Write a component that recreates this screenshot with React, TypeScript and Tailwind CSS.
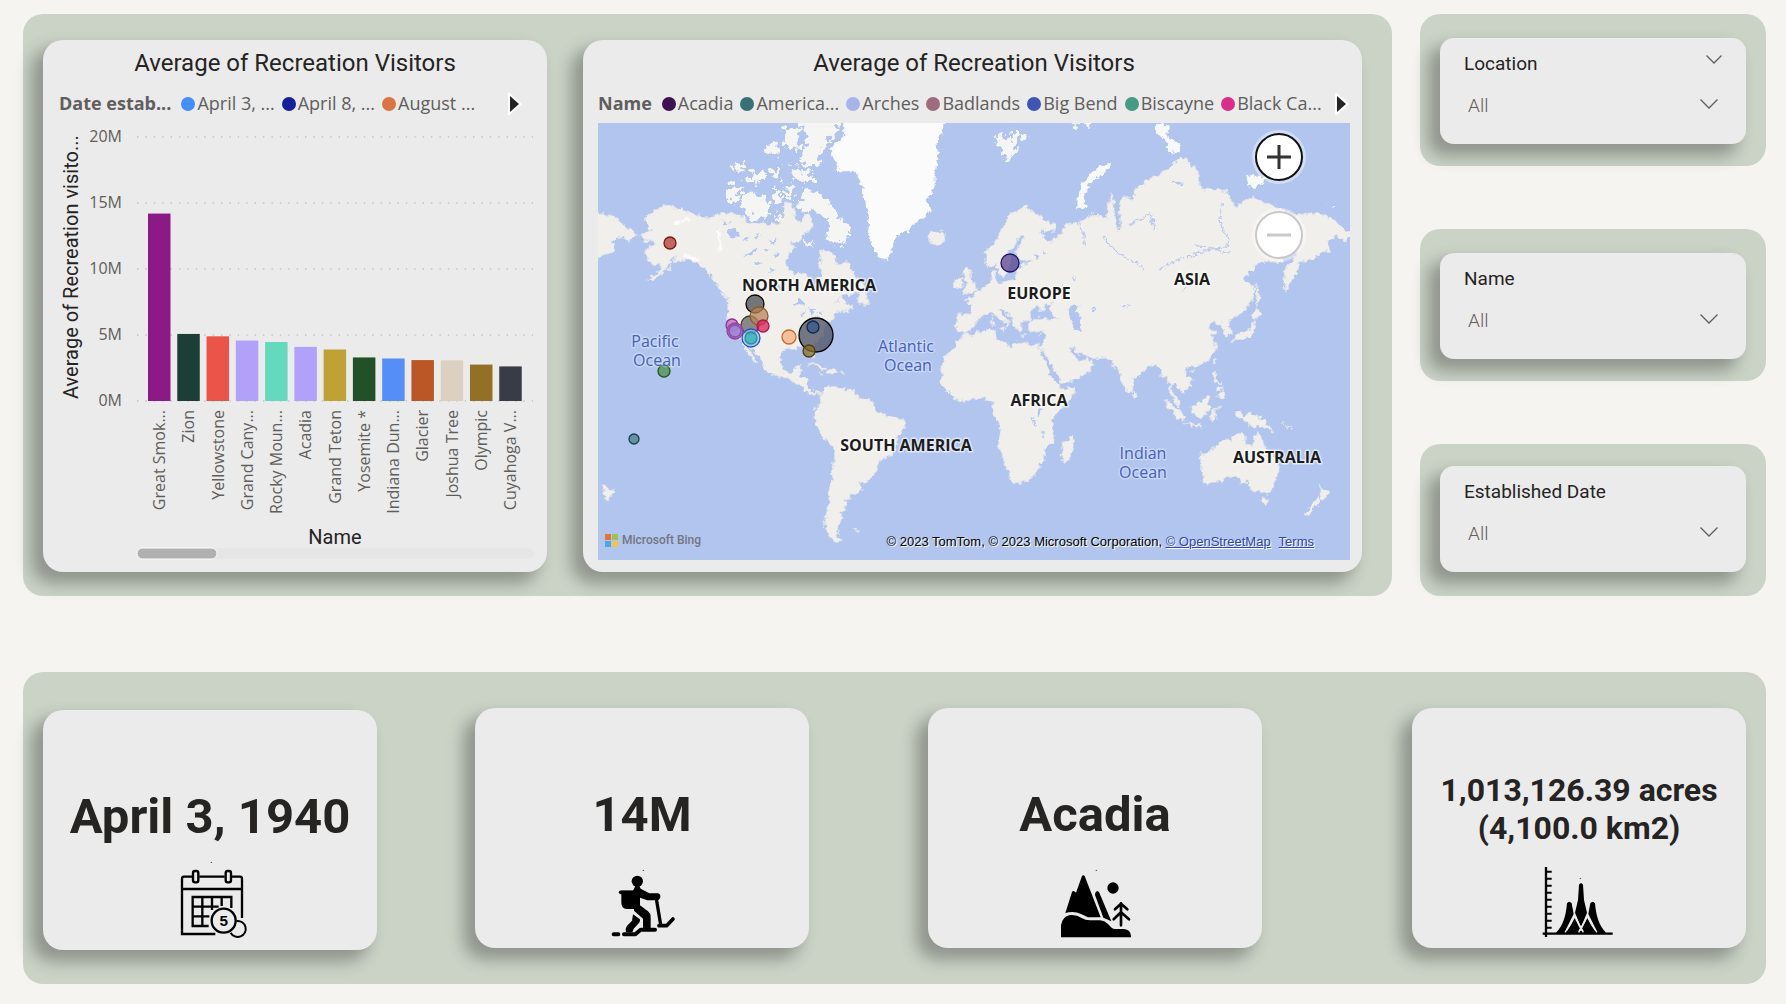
import React from "react";

type Ring = number[];

const NORTH_AMERICA: Ring = [-168,65.6,-166,64.5,-161,64.5,-161,63.5,-164.5,63,-166,61.6,-164,60,-162,59,-158,58.7,-157.5,57.5,-162,55.7,-164.5,54.6,-160,55.3,-156,57.3,-153.5,59,-151.8,61.1,-150,61.2,-151.8,59.3,-148,60,-144,60,-139.5,59.5,-136.5,58,-133.5,56.5,-131,54.5,-128.5,52,-125,50,-123,49,-124.7,48.3,-124,46,-124.4,42.8,-124,40.3,-122.4,37.5,-120.6,34.6,-118.4,33.9,-117.1,32.5,-115.8,30.2,-114.2,28.4,-115,27.8,-112.3,26,-112,24.7,-110,23,-109.5,23.4,-111,25.8,-112.8,28.3,-114.7,31.5,-113.1,31.3,-111,28,-109.3,26.5,-107.8,24.5,-106.3,23,-105.3,21.4,-105.6,20.3,-104,19,-101.8,17.8,-98.5,16.3,-95,16,-93.5,15.8,-91.5,14,-88,13.2,-87.5,12.7,-85.8,11,-85.5,10,-83.7,8.8,-82,8.2,-80.3,7.4,-79.5,8.9,-78,8,-77.4,7.4,-77,8.7,-79.5,9.6,-81.5,8.9,-83.4,10.5,-83.7,12.5,-83.2,15,-86,16,-88.5,15.8,-88,18,-87.5,20,-87,21.5,-90,21.2,-90.6,19.5,-91.8,18.5,-94.5,18.2,-96,19.3,-97.5,21.5,-97.5,24.5,-97.2,27.5,-95,29.2,-93,29.8,-90.5,29.2,-89,29.5,-88.5,30.4,-85.5,30,-84,30,-82.8,28.5,-82.5,27.3,-81.2,25.2,-80.3,25.5,-80.5,28.2,-81.4,30.5,-80.5,32.3,-78,33.9,-76,35,-75.7,36.5,-76.3,38.5,-75,38.5,-74.2,40.3,-72,41.2,-70.2,41.8,-70.8,43,-68.5,44.3,-66,45,-64.5,45.5,-66,43.7,-63.5,44.5,-60.5,45.7,-61.5,46.5,-64.5,46.7,-65,48,-67,49.2,-71,47,-66,50.2,-60,50.2,-56,52,-56,53.5,-60,55.5,-62,57.5,-64.5,60.2,-67,58.8,-69.5,59,-70,61,-74,62.3,-78,62.4,-77.5,60,-78.5,58.5,-76.8,57,-77,55.5,-79.5,54.5,-79,52,-80.5,51.3,-82.3,53,-82.3,55.2,-88,56.5,-92.5,57,-94.5,58.8,-94.5,60.3,-92.5,62,-90.5,63.2,-93,64,-88,64.2,-86.5,66,-82,66.8,-81.5,69,-85,69.8,-87.5,68,-90,69,-92,71.5,-95,71.8,-96,69.5,-98,68,-102,67.8,-108,68,-115,68,-115,69,-121,69.8,-125,70,-129,69.8,-135,69,-141,69.7,-148,70.5,-156.5,71.3,-162,70,-166.2,68.8,-164,67.5,-162,66.6,-166,66.2];

const SOUTH_AMERICA: Ring = [-77.4,8.5,-75.5,10.7,-72,12,-71.5,10.8,-70,12,-68,10.6,-64,10.3,-62,10.5,-60.5,8.5,-57.5,6.3,-54,5.8,-51.5,4.2,-50,1,-48,-0.8,-44.5,-2.5,-41,-2.9,-38.5,-3.8,-35.3,-5.3,-34.9,-8,-37,-11,-39,-13.5,-39,-17.5,-40.8,-21.5,-43,-23,-46,-24,-48.5,-26,-48.8,-28.6,-52,-32.5,-54.5,-34.8,-58,-34,-57,-36.5,-58,-38.2,-62,-39,-62.3,-40.8,-65,-41,-64,-42.5,-65.3,-45,-67.5,-46.2,-66,-48,-69,-50.5,-68.4,-52.5,-70,-53,-66,-55,-70,-55.3,-74,-53,-75.5,-49,-74.5,-46,-73,-42,-73.5,-38,-71.5,-33,-71.4,-29,-70.3,-23,-70.3,-18.4,-73,-16.5,-76.3,-14,-78.5,-9.5,-80,-6.3,-81.3,-4.5,-80,-2.8,-80.7,-1,-79.8,1,-77.5,3.5,-77.7,6.5];

const AFRICA: Ring = [-5.9,35.8,-2,35.1,3,36.8,10,37.3,10.8,35,10.5,34,15,32.3,19,30.3,20.5,32.6,25,31.7,29,30.9,32.3,31.2,32.6,29.9,34,26.7,35.5,24,37.2,21,37.5,18.8,39.5,15.5,43,12.2,43.3,11.5,45,10.5,51.2,11.9,50.5,9,48,4.5,45,1.8,41.5,-1.8,39.3,-5,39.5,-8,40.6,-11,40.6,-15,37,-17.8,34.8,-20,35.5,-24,32.8,-26,32.5,-28.5,30,-31.5,27,-33.7,22,-34.2,19.5,-34.8,18.2,-33,17.5,-30,15,-26.5,14.4,-22.5,11.8,-17.5,13.5,-12.5,12.3,-6,9.2,-2,9.5,1,9.5,4,7,4.3,5,5.8,1.5,6.2,-2,4.8,-7.5,4.4,-11,6.8,-13.3,9,-15,11,-16.7,12.5,-17.4,14.7,-16.3,17,-16.3,20,-17,21,-14.5,26,-12.8,27.9,-9.8,30,-9,32.5,-6.5,34.5];

const EURASIA: Ring = [-9,37,-6.3,36.8,-5.5,36.1,-2,36.8,0,38.6,-0.3,39.8,3,41.8,3.1,43.1,6.5,43.2,9,44.3,10.3,43.5,12.3,41.7,15.6,40,16,38,17,39,16.8,40.4,18.4,40,16,41.8,13.6,43.6,12.4,45.3,13.8,45,15,44.5,19.4,41.8,19.5,40,21.5,37,23,36.5,24,38,23,40.2,26,40.8,29,41.2,28,43.5,30.5,46,33,46,33.5,44.5,36.5,45.3,35,46.3,39,47.2,37.5,45,41.5,42,41,41.2,36,41.7,32,41.8,29,41,26.5,39.5,27.5,37,30.5,36.6,36,36.5,35.8,34.5,34.3,31.3,32.6,30.2,34,28,35,29.5,35,28,37,25,39,21.5,42.5,16.5,43.3,12.7,45,12.9,52,15.6,55,17.3,57.8,19,59.8,22.4,58.5,23.6,56.3,26.2,56,24.5,54,24.1,51.5,24.5,51.2,26,50.2,26.5,48,29.9,50,30.2,51.5,27.8,54.5,26.6,57,27,58.5,25.5,61.5,25.1,66.5,25.3,67.5,23.9,70,22.5,69,22,70.5,20.8,72.7,21,73,17.5,74.8,12.8,76.3,9.5,77.5,8,79.8,10.3,80.2,13.3,80.2,15.7,82.3,16.7,85,19.5,87,21.5,90,22,92,22.3,94.3,18.5,94.5,16,97,16.8,98.5,13,98.3,8.5,100.4,5.5,101.5,2.8,103.7,1.4,103.4,4,101.5,6.8,99.5,9.3,100,13.3,101,13,103,11,105,8.8,107,10.5,109.3,12,109,15,106,18.8,108,21.5,110,21.3,113.5,22.2,117,23.5,120,26.5,122,30,121,32.5,119.3,35,122.5,37,119,37.5,117.7,39,121,40.8,122,39.2,125,39.8,125,37.8,126.5,34.5,129.3,35.3,129.3,37,127.5,39.5,130.5,42.3,133,42.8,136,44.5,140.3,48.5,141,52.5,137,54,135.5,54.8,139,57,143,59.3,149,59.6,154.5,59.4,156.5,61.5,163,62,161,60.5,156,57,155.7,54,156.7,51,158.5,53,162,56,163.3,58,163,59.5,170,60,174,61.8,179,62.3,177.5,64.5,182,65.5,187,64.5,190,66,184,67.5,180,69,171,70,161,69.5,152,71,140,72.5,131,71,127,73.5,114,73.7,113,76,104.3,77.7,96,76,87,75,80.5,73.5,80,72,75,72.8,73,71,74,67.5,72,66.5,71,69,69.5,73,67,71,67,69,60,69.8,54,68.3,46,68,44,66.2,40,64.7,37,64.2,33,66.7,40.5,66.5,41,67.5,33,69.4,26,71,18,69.8,13,66,10.5,64,5.5,62,5.3,59,8,58,10.7,59.2,12.5,56.5,13,55.4,16,56.3,17.5,58.8,18.8,60,17.3,62,21.5,64.5,24,65.8,25.3,65,21.5,62.8,21.5,61,23,60,29.5,60,27.5,59.4,23.5,59,24,57.8,21.5,57.5,20.5,54.8,14,54,11,54,10.5,57.5,8.2,57,8.5,54,4.5,52.3,2,51,-1.5,49.5,-4.5,48.4,-1.5,46.5,-1.5,43.5,-8.5,43.5,-9,41];

const AUSTRALIA: Ring = [113.5,-22,114,-26.5,115.7,-32,115,-34.3,118,-35,124,-33.5,129,-31.7,131.5,-31.5,135.5,-34.8,138,-33,138,-35.7,140.5,-38,145,-38.3,147,-39,150,-37.5,151.5,-33,153.6,-28.5,153,-25.5,149,-20.5,146,-18.8,145.3,-15,142.5,-10.8,141.5,-13.5,140.8,-17.5,139.5,-17.5,135.5,-15,136.8,-12.2,132.5,-11.3,130,-13.5,129,-15,126.5,-14,122.5,-17.5,122,-18.3,118,-20.3];

const ISLANDS: Ring[] = [
  [49.3,-12,50.4,-15.5,47.5,-24.8,45,-25.5,43.5,-22.5,44.3,-19.5,44.5,-16.5,47.5,-15],
  [-196,70,-189,70,-180,69,-176,67.5,-170,66,-173,64.5,-178,65.5,-182,64.5,-181,62.3,-190,60.5,-196,60],
  [-5.5,50,1.4,51.2,0.5,53,-2,55.5,-2,57.5,-4,58.6,-6,57,-4.5,54.5,-3,53.5,-5,52],
  [-10,52,-6.3,52.2,-6,55,-8.5,55,-10,54],
  [-24,65.5,-22,64,-18.5,63.5,-14,64.7,-15,66.3,-22,66.3],
  [142,54,143.5,49.5,142,46.2,142,50],
  [140,42,140.3,43.3,142,45.4,145.3,43.3,143.2,42],
  [130,31.5,131.5,34,135.5,33.6,140,35.2,141.5,38,141.5,41.2,140,40.5,139,38,136.5,36.8,132.5,35.4,129.8,33],
  [120.3,23,121.2,25.2,121.8,24.8,120.9,22],
  [108.7,19.3,110.8,20,110,18.4],
  [120.3,16.5,121,18.5,122.2,18.3,121.6,15.5,124,13,121,13.8],
  [122,7,125.5,9.5,126.4,7.5,125.4,5.7],
  [122,10,124,11.5,125.5,12.3,125,10.3,123,9.3],
  [109,1.5,111.5,2.5,115.5,5.5,117,7,119,5.2,117.5,3,118.8,1,116.5,-2,115,-4,110.5,-3],
  [95.3,5.6,98,4.2,103,0,106,-3,105.7,-5.8,102.3,-4,99,0],
  [105.3,-6.8,108.5,-6.7,114.3,-7.7,114.3,-8.6,108,-7.8],
  [119,-3.3,120,0.5,125,1.5,120.7,0,121.5,-1.5,123,-5,121,-3,120.3,-5.5,119.5,-5.5],
  [131,-0.8,134,-0.8,135.2,-3.3,138,-1.6,145,-4.3,147.5,-6.5,150.5,-10.5,147,-9.5,143.5,-8.5,138,-8.3,138,-5.7,133,-4],
  [144.7,-40.8,148.2,-41,147,-43.5,146,-43.4],
  [172.7,-34.5,175.5,-36.8,178.5,-37.8,176.8,-40,175,-41.5,174,-39.3,174.7,-37],
  [172.8,-40.6,174.2,-41.7,171,-44.5,168.5,-46.6,166.5,-46],
  [-187.3,-34.5,-184.5,-36.8,-181.5,-37.8,-183.2,-40,-185,-41.5,-186,-39.3],
  [79.8,9.6,81.8,7.5,80.5,6,79.8,7],
  [12.5,38,15.5,38.2,15,36.8],
  [8.3,41,9.6,41,9.5,39.1,8.5,39],
  [8.7,42.6,9.5,42.8,9.2,41.5],
  [23.6,35.5,26.2,35.2,24.8,34.9],
  [32.4,34.9,34.4,35.6,33.6,34.8],
  [-84.8,22,-82,23.1,-79,22.5,-74.2,20.2,-77.5,19.9,-79,21.5,-82,22.5],
  [-74.3,18.5,-73,19.9,-70,19.7,-68.5,18.5,-71.5,17.8],
  [-78.3,18.3,-76.3,18.1,-77.5,17.8],
  [-67.2,18.4,-65.7,18.4,-66.8,17.9],
  [-59.3,47.7,-57,51,-55.5,51.5,-53,48.5,-53.5,46.7,-56,47],
  [-128,50.7,-125,49.8,-123.5,48.4,-126,49.2],
  [-154.5,57.5,-152.5,58.3,-152.5,57.2],
  [165.5,-20.5,167,-22.3,166,-21.8],
  [155,-6,157,-7.5,160.5,-9.5,156,-7.4],
  [-61,-51.5,-58,-51.5,-59,-52.3],
];

const POLAR_ISLANDS: Ring[] = [
  [52,70.8,57,70.7,55,72.5,58,74.5,68,76.3,69,77,60,76.2,55,74.5,52,72.5],
  [137,75.5,148,75.2,142,74,138,74],
  [91,80.8,98,80.6,97,79.6,104,79,104,78,98,78.2,96,79.4,91,80],
];

const ARCTIC: Ring[] = [
  [-62,66.5,-64.5,65,-67,63,-72,64,-74,65.5,-73,68,-79,70,-86,70,-89,71,-86,73.5,-81,73.5,-77,72.5,-71,71,-67,69],
  [-64,82.5,-70,80,-75,79,-79,76.5,-88,76.5,-85,79,-84,80,-90,81,-90,82.5],
  [-80,75.5,-92,76.5,-91,74.7,-81,74.6],
  [-117,71,-114,69.2,-105,69,-102,69.8,-105,72.5,-110,73,-117,73],
  [-125,72,-121,71.4,-117,73.5,-122,74.3,-124.5,74],
  [-95,74,-91,73.5,-92,72.5,-95,72.2],
  [-101,73.5,-97,73.8,-97,71.5,-102,72],
  [-116,75.5,-106,76,-106,74.8,-113,74.5],
  [-103,76,-98,76.5,-98,75],
  [-122,76.5,-116,77,-118,75.8],
  [-96,80.5,-88,80.5,-89,78.3,-95,78.5],
  [-105,79,-99,79,-99,77.8,-104,78],
  [-87,65.5,-82,64,-81,63.5,-86,63.5],
  [-99,70,-96,69,-99,68.7],
  [50,81.5,62,81.5,58,80.6,48,80.6],
  [11,79.6,15,77.4,18,76.9,20,78.6,26,79.8,21,80.2,16,79.4,13,79.9],
  [179,71.4,182,71.2,180,70.9],
];

const GREENLAND: Ring = [-66,82.5,-66,79.5,-73,78.5,-70,77,-68,76,-60,76,-57,74.5,-55,72,-54,70,-53,68,-53.5,66,-52,64,-50,62,-47.5,60.8,-44,59.9,-42.5,61.5,-41,63.5,-39,65.5,-34,66.5,-30,68,-25,69,-22,70.5,-24,72,-20,74,-20,76,-18,77.5,-19,79,-14,81,-12,82.5];

const LAKES: Ring[] = [
  [47,45,50,46.8,53,46.5,51,44.5,54,42,53.5,37,50,37.5,49.5,40.5,47.5,43],
  [-92,46.8,-88,48.6,-84.8,46.8,-88,46.8],
  [-87.8,42,-85,45.8,-86.2,43],
  [-84.5,46,-80,45,-82,43.2],
  [-83,41.6,-79,42.9,-80,42.2],
  [-79.5,43.4,-76.3,44,-77,43.4],
  [-98.5,53.5,-96.5,51,-97,50.8,-99,52.5],
  [-125,66.5,-120,67,-118,65.5,-122,65],
  [-117,61,-109,62.8,-112,61.2],
  [-111,59.3,-106,59.4,-110,58.7],
  [-117,64.8,-113,65.2,-115,64.2],
  [-111,65.5,-107,65.8,-109,64.8],
  [-104,64.5,-99,64.8,-101,63.8],
  [-107,62.5,-103,62.8,-105,61.9],
  [-103,58.5,-101,57.5,-102.5,56.5],
  [-127,68.4,-123,68.2,-125,67.6],
  [-101,61.5,-98,61.8,-99,60.9],
  [-73,55,-70,54.6,-72,54],
  [-66,54.5,-63,54,-65,53.6],
  [32,0.5,34.5,0,33,-2.5,31.8,-2],
  [29.2,-3.5,29.8,-3.5,31,-8.5,30.4,-8.5],
  [34,-10,34.8,-10,35,-14,34.3,-13],
  [59,45,61,46.3,60,44],
  [104,51.6,108,53.4,109.8,55.6,108.5,53.4,105,51.4],
  [30.5,61.5,32.8,61,31.5,59.9],
  [34.5,62.5,36.3,61.5,35.2,61],
  [74,46.5,79,46.6,75,45.6],
  [44,54,46,52,45.4,51],
  [49,56,51,55,50,54],
  [89,69,92,68.5,90,68],
  [100,74.8,106,74.5,102,74.2],
];

const project = (lon: number, lat: number): [number, number] => {
  const phi = (lat * Math.PI) / 180;
  return [376.3 + lon * 1.986, 287 - 113.8 * Math.log(Math.tan(Math.PI / 4 + phi / 2))];
};

const toPath = (rings: Ring[]) =>
  rings
    .map((ring) => {
      const points: string[] = [];
      for (let i = 0; i < ring.length; i += 2) {
        const [x, y] = project(ring[i], ring[i + 1]);
        points.push(`${x.toFixed(1)} ${y.toFixed(1)}`);
      }
      return `M${points.join("L")}Z`;
    })
    .join("");

const BUBBLES = [
  { x: 72, y: 120, r: 6, fill: "#b03a32", stroke: "#7d1512" },
  { x: 412, y: 140, r: 9, fill: "#5a4390", stroke: "#1e1160" },
  { x: 152, y: 202, r: 9, fill: "#666666", stroke: "#333333" },
  { x: 157, y: 181, r: 9, fill: "#4a4c50", stroke: "#000000" },
  { x: 161, y: 193, r: 9, fill: "#b88555", stroke: "#8a5a2b" },
  { x: 165, y: 203, r: 6, fill: "#dc1f5c", stroke: "#b0174a" },
  { x: 134, y: 202, r: 6, fill: "#c06ac8", stroke: "#8d2f9c" },
  { x: 137, y: 208, r: 8, fill: "#8f5aa8", stroke: "#b03a8c" },
  { x: 137, y: 208, r: 6, fill: "#a78be0", stroke: "#7a55b8" },
  { x: 153, y: 215, r: 9, fill: "#8fc0ee", stroke: "#1f55d0" },
  { x: 153, y: 215, r: 6, fill: "#2eb0b0", stroke: "#2a8c96" },
  { x: 191, y: 214, r: 7, fill: "#f6b080", stroke: "#c46a2c" },
  { x: 218, y: 212, r: 17, fill: "#4a4f60", stroke: "#000000" },
  { x: 215, y: 204, r: 6, fill: "#36598c", stroke: "#12284f" },
  { x: 211, y: 228, r: 6, fill: "#85702a", stroke: "#5a3a10" },
  { x: 66, y: 248, r: 6, fill: "#4d8f4a", stroke: "#1f5a1c" },
  { x: 36, y: 316, r: 5, fill: "#4a7f8c", stroke: "#1c3f48" },
];

const CONTINENTS = [
  { text: "NORTH AMERICA", x: 211, y: 168 },
  { text: "EUROPE", x: 441, y: 176 },
  { text: "ASIA", x: 594, y: 162 },
  { text: "AFRICA", x: 441, y: 283 },
  { text: "SOUTH AMERICA", x: 308, y: 328 },
  { text: "AUSTRALIA", x: 679, y: 340 },
];

const OCEANS = [
  { text: "Pacific", x: 57, y: 224 },
  { text: "Ocean", x: 59, y: 243 },
  { text: "Atlantic", x: 308, y: 229 },
  { text: "Ocean", x: 310, y: 248 },
  { text: "Indian", x: 545, y: 336 },
  { text: "Ocean", x: 545, y: 355 },
];

function WorldMap() {
  return (
    <svg viewBox="0 0 752 437" className="block h-auto w-full bg-[#b2c5ee]" role="img" aria-label="Visitors by park location">
      <defs>
        <filter id="coast" x="0" y="0" width="100%" height="100%">
          <feTurbulence type="fractalNoise" baseFrequency="0.22" numOctaves="2" seed="4" result="n" />
          <feDisplacementMap in="SourceGraphic" in2="n" scale="7" xChannelSelector="R" yChannelSelector="G" />
        </filter>
        <filter id="arctic" x="0" y="0" width="100%" height="100%">
          <feTurbulence type="fractalNoise" baseFrequency="0.16" numOctaves="3" seed="9" result="n" />
          <feDisplacementMap in="SourceGraphic" in2="n" scale="18" xChannelSelector="R" yChannelSelector="G" />
        </filter>
      </defs>
      <g filter="url(#coast)">
        <rect width="752" height="437" fill="#b2c5ee" />
        <path
          d={toPath([NORTH_AMERICA, SOUTH_AMERICA, AFRICA, EURASIA, AUSTRALIA, ...ISLANDS])}
          fill="#f0efeb"
          stroke="#dde1e9"
          strokeWidth="1"
        />
        <path d={toPath(POLAR_ISLANDS)} fill="#f7f8f8" />
        <path d={toPath(LAKES)} fill="#b2c5ee" />
        <path
          d="M506 112Q512 128 530 136T545 148M625 80Q618 98 628 112T612 126L590 134M480 100Q488 110 486 122M586 134L562 146M530 102L552 92L556 106M596 122L632 130M456 108L466 92"
          fill="none"
          stroke="#b8c7ec"
          strokeWidth="1.2"
        />
      </g>
      <g filter="url(#arctic)">
        <path d={toPath(ARCTIC)} fill="#f5f5f4" />
      </g>
      <g filter="url(#coast)">
        <path d={toPath([GREENLAND])} fill="#fbfbfb" />
        <path d="M76 100L92 96M86 132L102 138M120 108L123 128" stroke="#fbfbfb" strokeWidth="3" fill="none" />
      </g>
      {BUBBLES.map((b, i) => (
        <circle key={i} cx={b.x} cy={b.y} r={b.r} fill={b.fill} fillOpacity="0.75" stroke={b.stroke} strokeWidth="1.3" />
      ))}
      <g textAnchor="middle" paintOrder="stroke" stroke="#ffffff" strokeOpacity="0.6" strokeWidth="3" strokeLinejoin="round">
        {CONTINENTS.map((c) => (
          <text key={c.text} x={c.x} y={c.y} fill="#1c1c1c" className="font-['Open_Sans',sans-serif] text-[16px] font-bold">
            {c.text}
          </text>
        ))}
        {OCEANS.map((o, i) => (
          <text key={i} x={o.x} y={o.y} fill="#4560bd" strokeOpacity="0.3" className="font-['Open_Sans',sans-serif] text-[16px] font-medium">
            {o.text}
          </text>
        ))}
      </g>
    </svg>
  );
}

const BARS = [
  { name: "Great Smok...", value: 14.2, color: "#8c1a86" },
  { name: "Zion", value: 5.08, color: "#1d3d37" },
  { name: "Yellowstone", value: 4.9, color: "#eb5449" },
  { name: "Grand Cany...", value: 4.58, color: "#b2a1f9" },
  { name: "Rocky Moun...", value: 4.47, color: "#64d9be" },
  { name: "Acadia", value: 4.1, color: "#b2a1f9" },
  { name: "Grand Teton", value: 3.9, color: "#bea235" },
  { name: "Yosemite *", value: 3.3, color: "#225128" },
  { name: "Indiana Dun...", value: 3.22, color: "#568ef7" },
  { name: "Glacier", value: 3.1, color: "#bb5627" },
  { name: "Joshua Tree", value: 3.08, color: "#dcd0c0" },
  { name: "Olympic", value: 2.76, color: "#937026" },
  { name: "Cuyahoga V...", value: 2.62, color: "#393c47" },
];

function VisitorsChart() {
  return (
    <svg viewBox="0 0 504 449" className="block h-auto w-full" role="img" aria-label="Average of Recreation visitors by Name">
      {[20, 15, 10, 5, 0].map((m) => {
        const y = 278 - m * 13.2;
        return (
          <g key={m}>
            <line x1="94" x2="490" y1={y} y2={y} stroke="#c4c4c4" strokeWidth="1.4" strokeDasharray="1.4 7" />
            <text x="79" y={y + 5} textAnchor="end" fill="#605e5c" className="font-['Open_Sans',sans-serif] text-[16px]">
              {m}M
            </text>
          </g>
        );
      })}
      {BARS.map((bar, i) => {
        const x = 105 + i * 29.27;
        const h = bar.value * 13.2;
        return (
          <g key={bar.name}>
            <rect x={x} y={278 - h} width="22.5" height={h} fill={bar.color} />
            <text
              transform={`translate(${x + 17} 287) rotate(-90)`}
              textAnchor="end"
              fill="#605e5c"
              className="font-['Open_Sans',sans-serif] text-[16px]"
            >
              {bar.name}
            </text>
          </g>
        );
      })}
      <text transform="translate(35 276) rotate(-90)" fill="#252423" className="font-[Roboto,sans-serif] text-[20px]">
        Average of Recreation visito...
      </text>
      <text x="292" y="421" textAnchor="middle" fill="#252423" className="font-[Roboto,sans-serif] text-[20px]">
        Name
      </text>
      <rect x="94" y="425" width="397" height="11" rx="5.5" fill="#e6e6e6" />
      <rect x="94" y="425" width="80" height="11" rx="5.5" fill="#b0b0b0" stroke="#ffffff" />
    </svg>
  );
}

function NextButton() {
  return (
    <button type="button" aria-label="Next legend items" className="shrink-0">
      <svg viewBox="0 0 16 22" className="h-[22px] w-4">
        <path d="M3 3L12 11L3 19Z" fill="#252423" stroke="#fff" strokeWidth="4" paintOrder="stroke" />
      </svg>
    </button>
  );
}

type LegendItem = { text: string; dot: string };

const DATE_ITEMS: LegendItem[] = [
  { text: "April 3, ...", dot: "bg-[#438efb]" },
  { text: "April 8, ...", dot: "bg-[#15219a]" },
  { text: "August ...", dot: "bg-[#d97545]" },
];

const NAME_ITEMS: LegendItem[] = [
  { text: "Acadia", dot: "bg-[#3e1150]" },
  { text: "America...", dot: "bg-[#377075]" },
  { text: "Arches", dot: "bg-[#a7b4ea]" },
  { text: "Badlands", dot: "bg-[#a06b7c]" },
  { text: "Big Bend", dot: "bg-[#3d55b4]" },
  { text: "Biscayne", dot: "bg-[#489a84]" },
  { text: "Black Ca...", dot: "bg-[#da2c88]" },
];

function Legend({ title, items }: { title: string; items: LegendItem[] }) {
  return (
    <div className="flex h-[39px] items-center font-['Open_Sans',sans-serif] text-[18px] whitespace-nowrap text-[#605e5c]">
      <span className="mr-[10px] font-bold">{title}</span>
      <ul className="flex flex-1 gap-[7px]">
        {items.map((item) => (
          <li key={item.text} className="flex items-center gap-[2px]">
            <span className={`size-[14px] rounded-full ${item.dot}`} />
            {item.text}
          </li>
        ))}
      </ul>
      <NextButton />
    </div>
  );
}

const CARD = "bg-[#ebebeb] shadow-[-10px_10px_16px_2px_rgba(0,0,0,0.29)]";

function Slicer({ label, header, className = "pt-6 pb-[22px]" }: { label: string; header?: boolean; className?: string }) {
  const id = `slicer-${label.toLowerCase().replace(" ", "-")}`;
  return (
    <div className={`rounded-[20px] bg-[#cbd3c7] px-5 ${className}`}>
      <div className={`rounded-[14px] pt-[13px] pr-6 pb-[22px] pl-6 ${CARD}`}>
        <div className="flex items-center justify-between">
          <label htmlFor={id} className="text-[19px] leading-[26px] text-[#252423]">
            {label}
          </label>
          {header && (
            <button type="button" aria-label={`${label} options`} className="-mt-[10px]">
              <svg viewBox="0 0 16 9" className="h-[9px] w-4" fill="none" stroke="#605e5c" strokeWidth="1.3">
                <path d="M0.5 0.5L8 8L15.5 0.5" />
              </svg>
            </button>
          )}
        </div>
        <div className="relative mt-[13px]">
          <select id={id} className="block h-8 w-full appearance-none bg-transparent pl-1 text-[19px] font-light text-[#605e5c]">
            <option>All</option>
          </select>
          <svg
            viewBox="0 0 18 10"
            className="pointer-events-none absolute top-[9px] right-1 h-[10px] w-[18px]"
            fill="none"
            stroke="#605e5c"
            strokeWidth="1.3"
          >
            <path d="M0.5 0.5L9 9L17.5 0.5" />
          </svg>
        </div>
      </div>
    </div>
  );
}

function CalendarIcon() {
  return (
    <svg viewBox="465 630 210 210" className="size-[70px] overflow-visible" fill="none" stroke="#000" strokeWidth="7">
      <path d="M516 650H492Q486 650 486 656V822H586M538 650H614M636 650H660Q666 650 666 656V774M486 687H666" />
      <rect x="519" y="633" width="16" height="34" rx="6" />
      <rect x="617" y="633" width="16" height="34" rx="6" />
      <path d="M566 798H518V711H634V744M547 711V798M576 711V750M605 711V738M518 740H596M518 769H568" />
      <path d="M650 783A24 24 0 1 1 632 818" strokeWidth="6" />
      <circle cx="611" cy="782" r="36" />
      <text x="611" y="799" textAnchor="middle" fill="#000" stroke="none" fontSize="46" fontWeight="700" fontFamily="Liberation Sans, sans-serif">
        5
      </text>
    </svg>
  );
}

function HikerIcon() {
  return (
    <svg viewBox="471 534 210 210" className="size-[70px] overflow-visible" stroke="#000" strokeLinecap="round" strokeLinejoin="round">
      <circle cx="562" cy="574" r="17" stroke="none" />
      <path d="M556 588H568L572 596L598 610H624Q632 612 631 621Q630 630 621 631H592L570 623V646L594 664Q602 670 602 680V714H579V686L552 662V657H530Q514 655 514 638V612L510 606L513 602H549Z" stroke="none" />
      <path d="M512 607H550" strokeWidth="11" fill="none" />
      <path d="M549 673L570 688Q571 694 567 699L551 716L547 727H528Q525 716 530 709L546 692Z" stroke="none" />
      <path d="M491 733H505M522 733H556L572 719H615" strokeWidth="12" fill="none" />
      <path d="M620 632L632 704" strokeWidth="10" fill="none" />
      <path d="M627 707H650L669 687" strokeWidth="11" fill="none" />
    </svg>
  );
}

function MountainIcon() {
  return (
    <svg viewBox="480 534 210 210" className="size-[70px] overflow-visible">
      <path d="M546 558Q550 553 554 558L602 682H564L543 672Q522 662 496 669L516 606Q520 599 528 608Z" />
      <path d="M586 608Q592 598 598 608L634 694L610 683L585 615Z" />
      <circle cx="639" cy="594" r="17" />
      <path d="M483 742V706Q486 680 510 675Q530 673 545 684Q556 691 570 691H600Q614 692 624 702L635 713Q639 717 646 717H672Q692 719 693 738V742Z" />
      <path d="M663 706V640M645 658L663 641L682 658M641 688L663 667L687 688" fill="none" stroke="#000" strokeWidth="8" strokeLinecap="round" strokeLinejoin="round" />
    </svg>
  );
}

function DistributionIcon() {
  return (
    <svg viewBox="474 534 210 210" className="size-[70px] overflow-visible">
      <path d="M480 531V741M470 731H680" fill="none" stroke="#000" strokeWidth="7" />
      <path
        d="M480 545H497M480 566H497M480 587H497M480 608H497M480 629H497M480 650H497M480 671H497M480 692H497M480 713H497"
        stroke="#000"
        strokeWidth="6"
      />
      <path d="M510 728Q538 702 543 640Q550 631 557 640L563 672L535 728ZM660 728Q632 702 627 640Q620 631 613 640L607 672L635 728Z" />
      <path d="M579 584Q585 576 591 584L594 630L603 668L585 712L567 668L576 630Z" />
      <path d="M540 728L566 684L582 716L573 728ZM630 728L604 684L588 716L597 728Z" />
      <path d="M508 730H662L650 722H520Z" />
      <path d="M537 727Q555 705 566 678L592 727M633 727Q615 705 604 678L578 727" fill="none" stroke="#ebebeb" strokeWidth="4" />
    </svg>
  );
}

type StatProps = {
  value: React.ReactNode;
  icon: React.ReactNode;
  className?: string;
  valueClass?: string;
  dotClass?: string;
};

function Stat({ value, icon, className = "", valueClass = "text-[49px] leading-[64px]", dotClass = "-top-[6px]" }: StatProps) {
  return (
    <section className={`flex min-h-[240px] flex-1 flex-col items-center justify-end rounded-[20px] pb-[10px] ${CARD} ${className}`}>
      <p className={`text-center font-bold whitespace-nowrap text-[#252423] ${valueClass}`}>{value}</p>
      <div className="relative mt-[21px]">
        <span className={`absolute left-1/2 text-[10px] leading-3 ${dotClass}`}>.</span>
        {icon}
      </div>
    </section>
  );
}

export default function App() {
  return (
    <main className="min-h-screen bg-[#f5f4f0] pt-[14px] pr-5 pb-5 pl-[23px] font-[Roboto,sans-serif] text-[#252423]">
      <div className="flex gap-7">
        <div className="grid flex-1 grid-cols-[504fr_779fr] gap-9 rounded-[20px] bg-[#cbd3c7] pt-[26px] pr-[30px] pb-6 pl-5">
          <section className={`min-w-0 rounded-[20px] ${CARD}`}>
            <h2 className="pt-[2px] text-center text-[24px] leading-[42px]">Average of Recreation Visitors</h2>
            <div className="pr-6 pl-4">
              <Legend title="Date estab..." items={DATE_ITEMS} />
            </div>
            <VisitorsChart />
          </section>
          <section className={`min-w-0 rounded-[20px] pr-3 pb-3 pl-[15px] ${CARD}`}>
            <h2 className="pt-[2px] text-center text-[24px] leading-[42px]">Average of Recreation Visitors</h2>
            <Legend title="Name" items={NAME_ITEMS} />
            <div className="relative">
              <WorldMap />
              <div className="absolute top-[10px] right-[47px] flex flex-col gap-[30px]">
                <button type="button" aria-label="Zoom in" className="grid size-12 place-items-center rounded-full border-2 border-[#111] bg-white ring-3 ring-white/40">
                  <svg viewBox="0 0 24 24" className="size-6" stroke="#333" strokeWidth="3">
                    <path d="M0 12H24M12 0V24" />
                  </svg>
                </button>
                <button type="button" aria-label="Zoom out" className="grid size-12 place-items-center rounded-full border-2 border-[#c8c8c8] bg-white ring-3 ring-white/40">
                  <svg viewBox="0 0 24 24" className="size-6" stroke="#c8c8c8" strokeWidth="3">
                    <path d="M0 12H24" />
                  </svg>
                </button>
              </div>
              <div className="absolute bottom-3 left-[7px] flex items-center gap-1">
                <span className="grid grid-cols-2 gap-px">
                  <span className="size-[6px] bg-[#e8703a]" />
                  <span className="size-[6px] bg-[#97c455]" />
                  <span className="size-[6px] bg-[#4ba8e8]" />
                  <span className="size-[6px] bg-[#f6c445]" />
                </span>
                <span className="font-[Roboto,sans-serif] text-[12px] leading-4 font-medium text-[#737680]">Microsoft Bing</span>
              </div>
              <p className="absolute right-9 bottom-[10px] font-['Liberation_Sans',sans-serif] text-[13px] leading-4 whitespace-nowrap text-black [text-shadow:1px_1px_0_#fff]">
                © 2023 TomTom, © 2023 Microsoft Corporation,{" "}
                <a href="#osm" className="text-[#3046a8] underline">© OpenStreetMap</a>
                <a href="#terms" className="ml-2 text-[#3046a8] underline">Terms</a>
              </p>
            </div>
          </section>
        </div>
        <aside className="flex w-[346px] flex-col justify-between">
          <Slicer label="Location" header />
          <Slicer label="Name" />
          <Slicer label="Established Date" className="pt-[22px] pb-6" />
        </aside>
      </div>

      <div className="mt-[76px] flex items-start rounded-[20px] bg-[#cbd3c7] px-5 pt-9 pb-[34px]">
        <Stat className="mt-[2px]" value="April 3, 1940" icon={<CalendarIcon />} dotClass="-top-4" />
        <Stat className="ml-[98px]" value="14M" icon={<HikerIcon />} />
        <Stat className="ml-[119px]" value="Acadia" icon={<MountainIcon />} />
        <Stat
          className="ml-[150px]"
          value={
            <>
              1,013,126.39 acres
              <br />
              (4,100.0 km2)
            </>
          }
          valueClass="text-[32px] leading-[38px]"
          icon={<DistributionIcon />}
          dotClass="top-[2px]"
        />
      </div>
    </main>
  );
}
